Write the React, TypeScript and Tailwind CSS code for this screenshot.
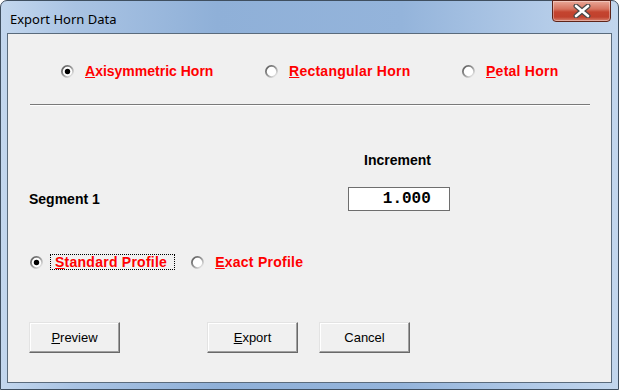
import React from 'react';

const Radio: React.FC<{ checked?: boolean; id: string }> = ({ checked, id }) => (
  <svg width="13" height="13" viewBox="0 0 13 13" className="shrink-0">
    <defs>
      <linearGradient id={id} x1="0" y1="0" x2="1" y2="1">
        <stop offset="0" stopColor="#555555" />
        <stop offset="0.55" stopColor="#a0a0a0" />
        <stop offset="1" stopColor="#ffffff" />
      </linearGradient>
    </defs>
    <circle cx="6.5" cy="6.5" r="5.6" fill="#ffffff" stroke={`url(#${id})`} strokeWidth="1.8" />
    {checked && <circle cx="6.5" cy="6.5" r="2.7" fill="#000000" />}
  </svg>
);

const Option: React.FC<{
  id: string;
  checked?: boolean;
  hot: string;
  rest: string;
  className?: string;
  focus?: boolean;
  wide?: boolean;
}> = ({ id, checked, hot, rest, className, focus, wide }) => (
  <div className={`flex items-center ${className ?? ''}`}>
    <Radio id={id} checked={checked} />
    <span
      className={`text-[14px] font-bold text-[#ff0000] leading-[14px] whitespace-nowrap ${
        wide ? 'tracking-[0.25px]' : ''
      } ${focus ? 'ml-[7px] border border-dotted border-black pl-[4px] pr-[7px]' : 'ml-[11px]'}`}
    >
      <u>{hot}</u>
      {rest}
    </span>
  </div>
);

const Button: React.FC<{ hot?: string; rest: string; className?: string }> = ({ hot, rest, className }) => (
  <button
    className={`w-[91px] h-[31px] bg-[#f0f0f0] border border-t-[#e3e3e3] border-l-[#e3e3e3] border-r-[#696969] border-b-[#696969] shadow-[inset_-1px_-1px_0_#a0a0a0,inset_1px_1px_0_#ffffff] text-[13px] text-black ${className ?? ''}`}
  >
    {hot && <u>{hot}</u>}
    {rest}
  </button>
);

const App: React.FC = () => {
  return (
    <div className="w-[619px] h-[390px] bg-white" style={{ fontFamily: '"Liberation Sans", Arial, sans-serif' }}>
      <div className="w-[619px] h-[390px] rounded-t-[7px] border border-[#3f4f60] bg-[linear-gradient(90deg,#c3d7ee_0%,#a9c3e3_12%,#8fb0d8_35%,#94b4db_65%,#b3cbe8_88%,#c2d6ed_100%)] flex flex-col relative">
        {/* Title bar */}
        <div className="h-[32px] flex items-start shrink-0">
          <span
            className="ml-[9px] mt-[10px] text-[13px] text-black leading-[16px]"
            style={{ fontFamily: '"Noto Sans", "Open Sans", sans-serif' }}
          >
            Export Horn Data
          </span>
          <div className="ml-auto mr-[7px] -mt-px w-[59px] h-[22px] rounded-b-[4px] border border-[#5e2419] bg-[linear-gradient(180deg,#e9a898_0%,#d6735f_40%,#c4442f_55%,#c0412d_80%,#d8826f_100%)] flex items-center justify-center shadow-[inset_0_0_0_1px_rgba(255,255,255,0.35)]">
            <svg width="18" height="14" viewBox="0 0 18 14">
              <path d="M3 2 L15 12 M15 2 L3 12" stroke="#4a4a4a" strokeWidth="5" strokeLinecap="round" />
              <path d="M3 2 L15 12 M15 2 L3 12" stroke="#ffffff" strokeWidth="2.6" strokeLinecap="round" />
            </svg>
          </div>
        </div>

        {/* Client area */}
        <div className="ml-[6px] w-[605px] h-[350px] border border-[#5a6b7c] bg-[#f0f0f0] flex flex-col">
          <div className="mt-[29px] h-[16px] flex items-center">
            <Option id="r1" checked hot="A" rest="xisymmetric Horn" className="ml-[53px] w-[204px]" />
            <Option id="r2" wide hot="R" rest="ectangular Horn" className="w-[197px]" />
            <Option id="r3" wide hot="P" rest="etal Horn" />
          </div>

          <div className="mt-[25px] ml-[22px] w-[560px] h-[2px] border-t border-[#7a7a7a] border-b border-b-white" />

          <div className="mt-[46px] h-[16px] flex items-center">
            <span className="ml-[356px] text-[14px] font-bold text-black leading-[16px]">Increment</span>
          </div>

          <div className="mt-[19px] h-[24px] flex items-center">
            <span className="ml-[21px] text-[14px] font-bold text-black leading-[16px]">Segment 1</span>
            <div
              className="ml-[248px] w-[102px] h-[24px] bg-white border border-[#6e6e6e] flex items-center justify-end pr-[18px] text-[16px] font-bold text-black"
              style={{ fontFamily: '"Liberation Mono", "Courier New", monospace' }}
            >
              1.000
            </div>
          </div>

          <div className="mt-[43px] h-[16px] flex items-center">
            <Option id="r4" checked focus wide hot="S" rest="tandard Profile" className="ml-[22px]" />
            <Option id="r5" wide hot="E" rest="xact Profile" className="ml-[16px]" />
          </div>

          <div className="mt-[52px] flex">
            <Button hot="P" rest="review" className="ml-[21px]" />
            <Button hot="E" rest="xport" className="ml-[87px]" />
            <Button rest="Cancel" className="ml-[21px]" />
          </div>
        </div>
      </div>
    </div>
  );
};

export default App;
